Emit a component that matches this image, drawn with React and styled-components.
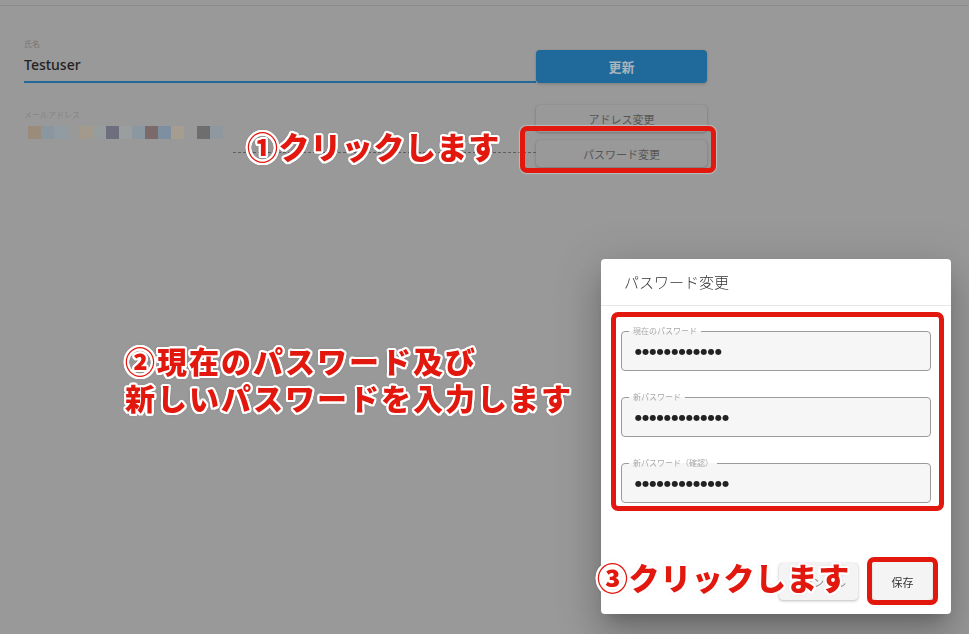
import React from 'react';
import styled, { createGlobalStyle } from 'styled-components';

const Global = createGlobalStyle`
  html, body { margin: 0; padding: 0; }
  body {
    background: #999999;
    width: 969px;
    height: 634px;
    overflow: hidden;
    font-family: "Noto Sans", "Noto Sans CJK JP", sans-serif;
  }
  * { box-sizing: border-box; }
`;

const Page = styled.div`
  position: relative;
  width: 969px;
  height: 634px;
  background: #999999;
`;

const TopBar = styled.div`
  height: 6px;
  border-bottom: 1px solid #8b8b8b;
`;

const Form = styled.div`
  display: grid;
  grid-template-columns: 512px 171px;
  padding: 33px 0 0 24px;
`;

const NameField = styled.div`
  display: flex;
  flex-direction: column;
`;

const SmallLabel = styled.div`
  font-size: 8px;
  line-height: 10px;
  color: ${p => p.$color || '#777'};
  font-family: "Noto Sans CJK JP", sans-serif;
`;

const NameValue = styled.div`
  margin-top: 6px;
  font-size: 14px;
  line-height: 20px;
  font-weight: 500;
  color: #222;
  padding-bottom: 6px;
  border-bottom: 2px solid #22699a;
`;

const PrimaryButton = styled.div`
  align-self: end;
  height: 33px;
  border-radius: 4px;
  background: #1f6a9a;
  color: #a9b4bd;
  font-family: "Noto Sans CJK JP", sans-serif;
  font-size: 13px;
  font-weight: 700;
  display: flex;
  align-items: center;
  justify-content: center;
  box-shadow: 0 1px 3px rgba(0, 0, 0, 0.2);
`;

const EmailField = styled.div`
  margin-top: 27px;
  display: flex;
  flex-direction: column;
`;

const Mosaic = styled.div`
  display: flex;
  margin: 6px 0 0 4px;
`;

const Tile = styled.div`
  width: 13px;
  height: 13px;
  background: ${p => p.$c || 'transparent'};
`;

const ButtonStack = styled.div`
  margin-top: 22px;
  display: flex;
  flex-direction: column;
  gap: 8px;
`;

const GhostButton = styled.div`
  height: 27px;
  border-radius: 4px;
  background: #999999;
  box-shadow: 0 1px 3px rgba(0, 0, 0, 0.22), 0 0 1px rgba(0, 0, 0, 0.15);
  color: #555;
  font-family: "Noto Sans CJK JP", sans-serif;
  font-size: 11px;
  display: flex;
  align-items: center;
  justify-content: center;
`;

const Overlay = styled.div`
  position: fixed;
  inset: 0;
  display: flex;
  justify-content: flex-end;
  align-items: flex-end;
  padding: 0 18px 20px 0;
`;

const Dialog = styled.div`
  width: 350px;
  background: #fff;
  border-radius: 4px;
  box-shadow: 0 11px 15px -7px rgba(0, 0, 0, 0.2),
    0 24px 38px 3px rgba(0, 0, 0, 0.14), 0 9px 46px 8px rgba(0, 0, 0, 0.12);
`;

const DialogTitle = styled.div`
  height: 47px;
  line-height: 46px;
  padding-left: 23px;
  border-bottom: 1px solid #e6e6e6;
  font-family: "Noto Sans CJK JP", sans-serif;
  font-size: 15px;
  font-weight: 300;
  color: #333;
`;

const DialogBody = styled.div`
  padding: 25px 20px 0;
  display: flex;
  flex-direction: column;
  gap: 26px;
`;

const Field = styled.div`
  position: relative;
  height: 40px;
  border: 1px solid #9a9a9a;
  border-radius: 4px;
  background: #f6f6f6;
  display: flex;
  align-items: center;
  padding-left: 13px;
`;

const FieldLabel = styled.span`
  position: absolute;
  top: -6px;
  left: 7px;
  padding: 0 4px;
  font-family: "Noto Sans CJK JP", sans-serif;
  font-size: 8px;
  line-height: 10px;
  color: #a8a8a8;
  background: linear-gradient(#fff 50%, #f6f6f6 50%);
`;

const Dots = styled.span`
  font-family: "DejaVu Sans", sans-serif;
  font-size: 8px;
  letter-spacing: 0.3px;
  color: #222;
`;

const DialogActions = styled.div`
  display: flex;
  justify-content: flex-end;
  gap: 15px;
  padding: 60px 19px 14px 0;
`;

const ActionButton = styled.div`
  height: 37px;
  min-width: 59px;
  padding: 0 12px;
  border-radius: 4px;
  background: #f4f4f4;
  box-shadow: 0 1px 3px rgba(0, 0, 0, 0.25), 0 0 1px rgba(0, 0, 0, 0.15);
  color: ${p => p.$muted ? '#888' : '#333'};
  font-family: "Noto Sans CJK JP", sans-serif;
  font-size: 11px;
  display: flex;
  align-items: center;
  justify-content: center;
`;

const RedBox = styled.div`
  position: absolute;
  left: ${p => p.$x}px;
  top: ${p => p.$y}px;
  width: ${p => p.$w}px;
  height: ${p => p.$h}px;
  border: 5px solid #e2180e;
  border-radius: 7px;
  box-shadow: 0 0 1px 1px rgba(255, 255, 255, 0.35);
`;

const Leader = styled.div`
  position: absolute;
  left: ${p => p.$x}px;
  top: ${p => p.$y}px;
  width: ${p => p.$w}px;
  border-top: 1px dashed #5e5e5e;
`;

const RedText = styled.div`
  position: absolute;
  left: ${p => p.$x}px;
  top: ${p => p.$y}px;
  font-family: "Noto Sans CJK JP", sans-serif;
  font-weight: 900;
  font-size: ${p => p.$size}px;
  line-height: ${p => p.$lh}px;
  letter-spacing: ${p => p.$ls}px;
  color: #e2180e;
  white-space: pre;
  text-shadow: 2px 0 #fff, -2px 0 #fff, 0 2px #fff, 0 -2px #fff,
    1.5px 1.5px #fff, -1.5px 1.5px #fff, 1.5px -1.5px #fff, -1.5px -1.5px #fff,
    2px 1px #fff, -2px 1px #fff, 2px -1px #fff, -2px -1px #fff,
    1px 2px #fff, -1px 2px #fff, 1px -2px #fff, -1px -2px #fff,
    0 0 4px rgba(0, 0, 0, 0.25);
`;

const mosaic = [
  '#9b8b7a', '#8a96a0', '#909ca2', null, '#a39a8e', '#979d9d', '#6e6e7e',
  '#9a9e9e', '#8b98a2', '#7c6a6a', '#7d8fa0', '#a69c90', null, '#6e6e6e', '#8e989e',
];

const fields = [
  { label: '現在のパスワード', count: 12 },
  { label: '新パスワード', count: 13 },
  { label: '新パスワード（確認）', count: 13 },
];

export default function App() {
  return (
    <Page>
      <Global />
      <TopBar />
      <Form>
        <NameField>
          <SmallLabel>氏名</SmallLabel>
          <NameValue>Testuser</NameValue>
        </NameField>
        <PrimaryButton>更新</PrimaryButton>
        <EmailField>
          <SmallLabel $color="#868686">メールアドレス</SmallLabel>
          <Mosaic>
            {mosaic.map((c, i) => <Tile key={i} $c={c} />)}
          </Mosaic>
        </EmailField>
        <ButtonStack>
          <GhostButton>アドレス変更</GhostButton>
          <GhostButton>パスワード変更</GhostButton>
        </ButtonStack>
      </Form>

      <Overlay>
        <Dialog>
          <DialogTitle>パスワード変更</DialogTitle>
          <DialogBody>
            {fields.map(f => (
              <Field key={f.label}>
                <FieldLabel>{f.label}</FieldLabel>
                <Dots>{'●'.repeat(f.count)}</Dots>
              </Field>
            ))}
          </DialogBody>
          <DialogActions>
            <ActionButton $muted>キャンセル</ActionButton>
            <ActionButton>保存</ActionButton>
          </DialogActions>
        </Dialog>
      </Overlay>

      <Leader $x={233} $y={152} $w={303} />
      <RedBox $x={520} $y={126} $w={196} $h={47} />
      <RedBox $x={611} $y={312} $w={333} $h={199} />
      <RedBox $x={867} $y={557} $w={71} $h={48} />
      <RedText $x={247} $y={127} $size={31} $lh={38} $ls={0.6}>①クリックします</RedText>
      <RedText $x={125} $y={342} $size={30} $lh={37} $ls={2}>{'②現在のパスワード及び\n新しいパスワードを入力します'}</RedText>
      <RedText $x={597} $y={558} $size={31} $lh={38} $ls={0.6}>③クリックします</RedText>
    </Page>
  );
}
